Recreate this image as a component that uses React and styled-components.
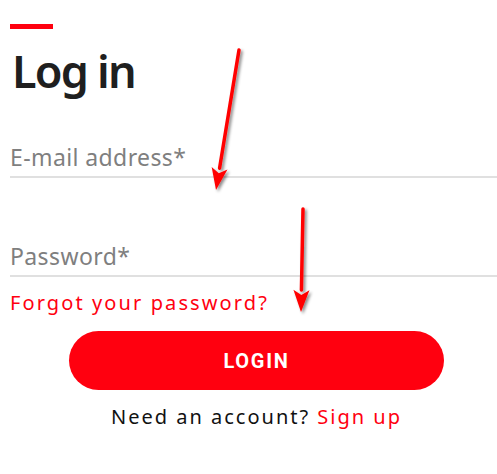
import React from 'react';
import styled, { createGlobalStyle } from 'styled-components';

const GlobalStyle = createGlobalStyle`
  body {
    margin: 0;
    background: #fff;
    font-family: "Noto Sans", "DejaVu Sans", sans-serif;
  }
`;

const Page = styled.div`
  position: relative;
  width: 497px;
  height: 474px;
  overflow: hidden;
  padding: 24px 0 0 10px;
  box-sizing: border-box;
`;

const Accent = styled.div`
  width: 43px;
  height: 5px;
  background: #ff000f;
`;

const Title = styled.h1`
  margin: 17px 0 0 2px;
  font-family: "Noto Sans", sans-serif;
  font-size: 45px;
  font-weight: 600;
  line-height: 50px;
  color: #1f1f1f;
  letter-spacing: -1.8px;
`;

const Form = styled.form`
  display: flex;
  flex-direction: column;
  width: 493px;
  margin-top: 46px;
`;

const Field = styled.input`
  display: block;
  width: 100%;
  box-sizing: border-box;
  border: none;
  border-bottom: 2px solid #e0e0e0;
  padding: 0 0 4px;
  margin: ${(p) => p.$gap || 0}px 0 0;
  font-family: "Noto Sans", sans-serif;
  font-size: 23px;
  letter-spacing: 0.4px;
  line-height: 30px;
  background: transparent;
  outline: none;

  &::placeholder {
    color: #7f7f7f;
  }
`;

const TextLink = styled.a`
  color: #ff000f;
  text-decoration: none;
  cursor: pointer;
`;

const Forgot = styled(TextLink)`
  margin-top: 13px;
  font-size: 20px;
  letter-spacing: 2.1px;
  line-height: 26px;
`;

const Button = styled.button`
  align-self: center;
  width: 375px;
  height: 59px;
  margin-top: 15px;
  border: none;
  border-radius: 30px;
  background: #ff000f;
  color: #fff;
  font-family: Roboto, sans-serif;
  font-weight: 700;
  font-size: 20px;
  letter-spacing: 1.7px;
  cursor: pointer;
`;

const Footer = styled.p`
  margin: 13px 0 0;
  text-align: center;
  font-size: 20px;
  letter-spacing: 2px;
  color: #111;
`;

const Arrows = styled.svg`
  position: absolute;
  left: 0;
  top: 0;
  pointer-events: none;
`;

const Arrow = ({ x1, y1, x2, y2 }) => {
  const dx = x2 - x1;
  const dy = y2 - y1;
  const len = Math.hypot(dx, dy);
  const ux = dx / len;
  const uy = dy / len;
  const bx = x2 - ux * 22;
  const by = y2 - uy * 22;
  const px = -uy * 8;
  const py = ux * 8;
  return (
    <g filter="url(#shadow)">
      <line x1={x1} y1={y1} x2={bx} y2={by} stroke="#ff0000" strokeWidth="3.5" strokeLinecap="round" />
      <polygon
        points={`${x2},${y2} ${bx + px},${by + py} ${bx + ux * 5},${by + uy * 5} ${bx - px},${by - py}`}
        fill="#ff0000"
      />
    </g>
  );
};

export default function App() {
  return (
    <>
      <GlobalStyle />
      <Page>
        <Accent />
        <Title>Log in</Title>
        <Form onSubmit={(e) => e.preventDefault()}>
          <Field type="email" placeholder="E-mail address*" />
          <Field type="password" placeholder="Password*" $gap={63} />
          <Forgot>Forgot your password?</Forgot>
          <Button type="submit">LOGIN</Button>
          <Footer>
            Need an account? <TextLink>Sign up</TextLink>
          </Footer>
        </Form>
        <Arrows width="497" height="474">
          <defs>
            <filter id="shadow" x="-50%" y="-50%" width="200%" height="200%">
              <feDropShadow dx="2" dy="2" stdDeviation="1.5" floodColor="#000" floodOpacity="0.45" />
            </filter>
          </defs>
          <Arrow x1={239} y1={50} x2={216} y2={190} />
          <Arrow x1={303} y1={209} x2={301} y2={312} />
        </Arrows>
      </Page>
    </>
  );
}
